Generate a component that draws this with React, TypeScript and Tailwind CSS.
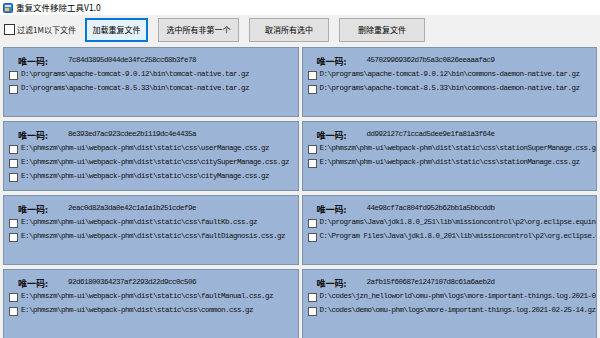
import React from 'react';

type Group = { hash: string; files: string[] };

const groups: Group[] = [
  {
    hash: '7c84d3895d044de34fc258cc68b3fe78',
    files: [
      'D:\\programs\\apache-tomcat-9.0.12\\bin\\tomcat-native.tar.gz',
      'D:\\programs\\apache-tomcat-8.5.33\\bin\\tomcat-native.tar.gz',
    ],
  },
  {
    hash: '457029969362d7b5a3c0826eeaaafac9',
    files: [
      'D:\\programs\\apache-tomcat-9.0.12\\bin\\commons-daemon-native.tar.gz',
      'D:\\programs\\apache-tomcat-8.5.33\\bin\\commons-daemon-native.tar.gz',
    ],
  },
  {
    hash: '8e393ed7ac923cdee2b1119dc4e4435a',
    files: [
      'E:\\phmszm\\phm-ui\\webpack-phm\\dist\\static\\css\\userManage.css.gz',
      'E:\\phmszm\\phm-ui\\webpack-phm\\dist\\static\\css\\citySuperManage.css.gz',
      'E:\\phmszm\\phm-ui\\webpack-phm\\dist\\static\\css\\cityManage.css.gz',
    ],
  },
  {
    hash: 'dd992127c71ccad5dee9e1fa81a3f64e',
    files: [
      'E:\\phmszm\\phm-ui\\webpack-phm\\dist\\static\\css\\stationSuperManage.css.gz',
      'E:\\phmszm\\phm-ui\\webpack-phm\\dist\\static\\css\\stationManage.css.gz',
    ],
  },
  {
    hash: '2eac0d82a3da0e42c1a1a1b251cdef9e',
    files: [
      'E:\\phmszm\\phm-ui\\webpack-phm\\dist\\static\\css\\faultKb.css.gz',
      'E:\\phmszm\\phm-ui\\webpack-phm\\dist\\static\\css\\faultDiagnosis.css.gz',
    ],
  },
  {
    hash: '44e98cf7ac804fd952b62bb1a5bbcddb',
    files: [
      'D:\\programs\\Java\\jdk1.8.0_251\\lib\\missioncontrol\\p2\\org.eclipse.equinox.p2.engine',
      'C:\\Program Files\\Java\\jdk1.8.0_201\\lib\\missioncontrol\\p2\\org.eclipse.equinox.p2.engine',
    ],
  },
  {
    hash: '92d61800364237af2293d22d9cc0c506',
    files: [
      'E:\\phmszm\\phm-ui\\webpack-phm\\dist\\static\\css\\faultManual.css.gz',
      'E:\\phmszm\\phm-ui\\webpack-phm\\dist\\static\\css\\common.css.gz',
    ],
  },
  {
    hash: '2afb15f60687e1247107d8c61a6aeb2d',
    files: [
      'D:\\codes\\jzn_helloworld\\omu-phm\\logs\\more-important-things.log.2021-02-25-14.gz',
      'D:\\codes\\demo\\omu-phm\\logs\\more-important-things.log.2021-02-25-14.gz',
    ],
  },
];

const mono = { fontFamily: '"Liberation Mono", "Noto Sans CJK SC", monospace' };
const cjk = { fontFamily: '"Noto Sans CJK SC", "Liberation Sans", sans-serif' };

const Box = () => (
  <span className="inline-block w-[9px] h-[9px] shrink-0 bg-white border border-[#555]" />
);

// one group of identical files, paths are clipped at the panel edge like the original
const GroupPanel = ({ group }: { group: Group }) => (
  <div className="h-[70px] overflow-hidden bg-[#9cb4d6] border border-[#8193a9] pt-[6px] pl-[5px]">
    <div className="flex items-center h-[14px] text-[#111]">
      <span className="ml-[9px] w-[50px] text-[9px] font-bold leading-none" style={cjk}>
        唯一码:
      </span>
      <span className="text-[7.5px] tracking-[-0.5px] leading-none" style={mono}>
        {group.hash}
      </span>
    </div>
    {group.files.map((f) => (
      <div key={f} className="flex items-center gap-[3px] h-[14px] whitespace-nowrap text-[#111]">
        <Box />
        <span className="text-[7.5px] tracking-[-0.5px] leading-none" style={mono}>
          {f}
        </span>
      </div>
    ))}
  </div>
);

const Button = ({ label, focused, w }: { label: string; focused?: boolean; w: string }) => (
  <button
    className={
      focused
        ? `${w} h-[24px] bg-[#e5f1fb] border-2 border-[#0078d7] text-[8px] text-black`
        : `${w} h-[24px] bg-[#e1e1e1] border border-[#adadad] text-[8px] text-black`
    }
    style={cjk}
  >
    {label}
  </button>
);

export default function App() {
  return (
    <div className="w-[600px] h-[338px] overflow-hidden bg-[#f0f0f0] select-none" style={cjk}>
      {/* title bar */}
      <div className="flex items-center h-[15px] pl-[3px] gap-[3px] bg-white">
        <svg width="10" height="10" viewBox="0 0 10 10">
          <rect x="0.5" y="0.5" width="9" height="9" rx="1" fill="#3b7fd1" stroke="#1d5aa8" />
          <rect x="2" y="2" width="6" height="2" fill="#cfe3fb" />
          <rect x="2" y="5" width="4" height="3" fill="#f5c542" />
        </svg>
        <span className="text-[8.5px] leading-none text-black">重复文件移除工具V1.0</span>
      </div>

      {/* toolbar */}
      <div className="flex items-center h-[29px] pl-[4px]">
        <label className="flex items-center gap-[2px] w-[81px]">
          <span className="inline-block w-[11px] h-[11px] bg-white border border-[#333]" />
          <span className="text-[8px] leading-none text-[#222]">过滤1M以下文件</span>
        </label>
        <div className="flex items-center gap-[10px]">
          <Button label="加载重复文件" focused w="w-[63px]" />
          <Button label="选中所有非第一个" w="w-[81px]" />
          <Button label="取消所有选中" w="w-[80px]" />
          <Button label="删除重复文件" w="w-[86px]" />
        </div>
      </div>

      {/* groups */}
      <div className="grid grid-cols-2 gap-x-[3px] gap-y-[4px] px-[3px] pt-[3px]">
        {groups.map((g) => (
          <GroupPanel key={g.hash} group={g} />
        ))}
      </div>
    </div>
  );
}
